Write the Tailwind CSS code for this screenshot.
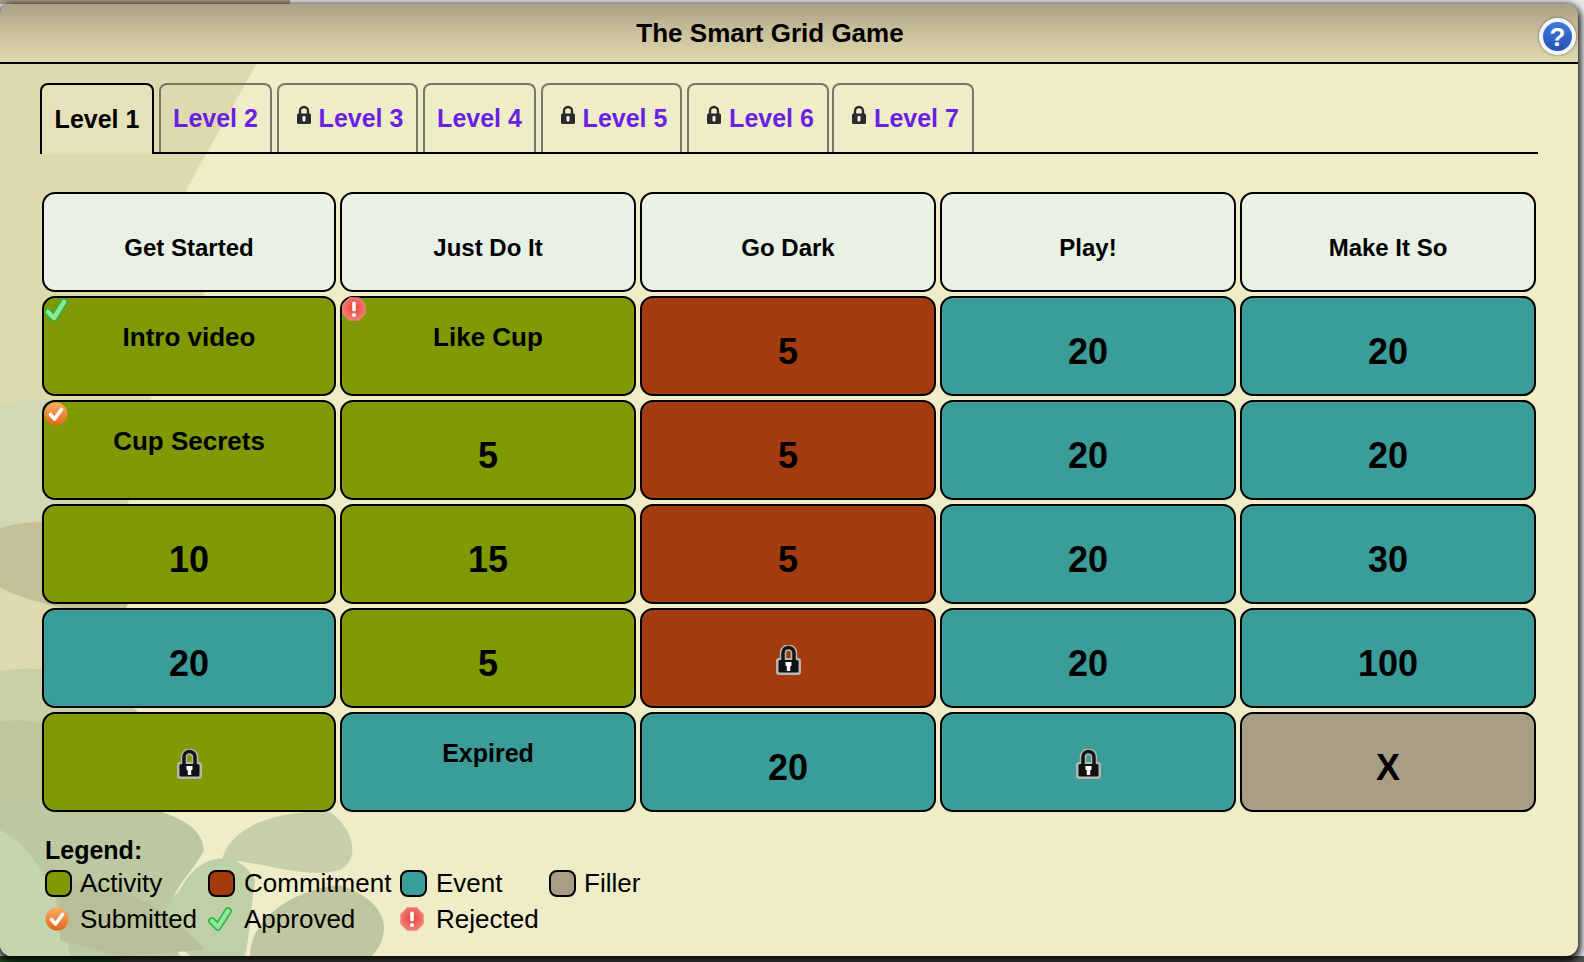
<!DOCTYPE html>
<html lang="en">
<head>
    <meta charset="UTF-8">
    <title>The Smart Grid Game</title>
    <script src="https://cdn.jsdelivr.net/npm/@tailwindcss/browser@4"></script>
</head>
<body class="bg-[#e9e9e9]">
    <!-- Shared icons -->
    <svg class="absolute w-0 h-0">
        <defs>
            <linearGradient id="orangeFill" x1="0" y1="0" x2="0" y2="1"><stop offset="0" stop-color="#fbae62"/><stop offset="1" stop-color="#e0661c"/></linearGradient>
            <radialGradient id="redFill" cx="50%" cy="45%" r="60%"><stop offset="0" stop-color="#ea4238"/><stop offset="1" stop-color="#f2807a"/></radialGradient>
            <symbol id="approved" viewBox="0 0 24 24">
                <path d="M4 14 L10 20 L20 4" fill="none" stroke="#2bb244" stroke-width="7.5" stroke-linecap="round" stroke-linejoin="round"/>
                <path d="M4 14 L10 20 L20 4" fill="none" stroke="#8fe898" stroke-width="4.5" stroke-linecap="round" stroke-linejoin="round"/>
            </symbol>
            <symbol id="submitted" viewBox="0 0 24 24">
                <circle cx="12" cy="12" r="11.5" fill="url(#orangeFill)"/>
                <path d="M6.5 12.5 L10.5 17 L17.5 7.5" fill="none" stroke="#fff" stroke-width="3.6" stroke-linecap="round" stroke-linejoin="round"/>
            </symbol>
            <symbol id="rejected" viewBox="0 0 24 24">
                <path d="M7.5 1 H16.5 L23 7.5 V16.5 L16.5 23 H7.5 L1 16.5 V7.5 Z" fill="url(#redFill)" stroke="#ee7f76" stroke-width="1.5" stroke-linejoin="round"/>
                <rect x="10.2" y="4.5" width="3.6" height="10" rx="1.7" fill="#fff"/>
                <circle cx="12" cy="18" r="2.1" fill="#fff"/>
            </symbol>
            <symbol id="lock" viewBox="0 0 25 30">
                <path d="M7 15 V8 a5.5 5.5 0 0 1 11 0 V15" fill="none" stroke="#b4b6b0" stroke-width="6.5"/>
                <rect x="0" y="13" width="25" height="17" rx="3" fill="#b4b6b0"/>
                <path d="M7 15 V8 a5.5 5.5 0 0 1 11 0 V15" fill="none" stroke="#151515" stroke-width="3.5"/>
                <rect x="2.5" y="15" width="20" height="12.5" rx="1.5" fill="#111"/>
                <path d="M9.5 17 h6 v3.5 l-1.3 1 v4.5 h-3.4 v-4.5 l-1.3 -1 Z" fill="#fff"/>
            </symbol>
            <symbol id="tabLock" viewBox="0 0 16 20">
                <path d="M4 10 V6 a4 4 0 0 1 8 0 V10" fill="none" stroke="#2b2b2b" stroke-width="2.4"/>
                <rect x="1" y="8.5" width="14" height="10.5" rx="1.5" fill="#2b2b2b"/>
                <rect x="6.5" y="11" width="3" height="5.5" rx="1" fill="#f2f2f2"/>
            </symbol>
        </defs>
    </svg>

    <div class="relative w-[1584px] h-[962px] overflow-hidden pt-[4px] font-['Liberation_Sans',Arial,sans-serif] text-black">
        <!-- Desktop behind the dialog -->
        <div class="absolute left-0 top-0 w-[290px] h-[4px] bg-[#a99a86]"></div>
        <div class="absolute left-0 bottom-0 w-[120px] h-[6px] bg-[#1f4a22]"></div>
        <div class="absolute left-[120px] bottom-0 w-[1464px] h-[6px] bg-[#4e4f4c]"></div>

        <div class="relative w-[1578px] h-[952px] rounded-[12px] bg-[#efecc8] shadow-[0_3px_7px_3px_rgba(0,0,0,0.85)]">
            <!-- Leaf wallpaper -->
            <svg class="absolute inset-0 w-[1578px] h-[952px] rounded-[12px]" viewBox="0 4 1578 952">
                <path d="M0 63 H257 L186 190 L205 292 L150 400 L60 720 L0 730 Z" fill="#dfd9ae"/>
                <path d="M0 403 C50 395 120 400 150 430 L120 530 L0 528 Z" fill="#d2d8b2"/>
                <path d="M0 528 C45 515 120 520 150 560 L120 620 C70 610 20 600 0 587 Z" fill="#c4c098"/>
                <path d="M0 671 C70 660 130 690 150 730 L150 820 L0 800 Z" fill="#c8d0a8"/>
                <path d="M0 722 C40 715 70 730 90 760 L60 810 L0 800 Z" fill="#bfc69c"/>
                <path d="M0 798 C90 800 200 800 204 850 C190 880 150 900 180 956 L0 956 Z" fill="#bcc8a0"/>
                <path d="M0 830 C40 850 60 900 70 956 H0 Z" fill="#c4d6ae"/>
                <path d="M222 860 C230 825 280 810 330 812 C355 830 360 860 340 870 C300 880 260 860 222 860 Z" fill="#c6cfa8"/>
                <path d="M180 890 C200 850 240 850 255 880 C250 915 250 935 245 956 H190 C160 930 160 910 180 890 Z" fill="#c0d0a6"/>
                <path d="M250 956 C250 920 290 890 340 885 C385 900 395 930 372 956 Z" fill="#c0c7a0"/>
                <path d="M60 880 C120 880 170 910 205 950 L120 956 L60 940 Z" fill="#b6bf98"/>
            </svg>

            <div class="relative flex flex-col h-full">
                <!-- Title bar -->
                <div class="relative flex items-center justify-center h-[60px] shrink-0 pr-[38px] border-b-2 border-black rounded-t-[12px] bg-gradient-to-b from-[#aca085] via-[#c9c19c] to-[#dfd9ae]">
                    <h1 class="text-[26px] font-bold leading-none">The Smart Grid Game</h1>
                    <button class="absolute left-[1539px] top-[14px] flex items-center justify-center w-[37px] h-[37px] rounded-full border-[4px] border-[#f2f4fa] bg-gradient-to-b from-[#3f79dc] to-[#2353b4] shadow-[0_0_3px_rgba(0,0,0,0.5)] text-white text-[26px] font-bold leading-none">?</button>
                </div>

                <!-- Level tabs -->
                <div class="flex gap-[5px] mt-[19px] ml-[40px] w-[1498px] h-[71px] border-b-2 border-black">
                    <div class="flex items-center justify-center w-[114px] h-[71px] border-2 border-b-0 border-black rounded-t-[8px] bg-[#e7e1ba] text-[25px] font-bold">Level 1</div>
                    <div class="flex items-center justify-center w-[113px] border-2 border-b-0 border-[#77776a] rounded-t-[8px] text-[25px] font-bold text-[#6a1fe4]">Level 2</div>
                    <div class="flex items-center justify-center gap-[7px] pl-[4px] w-[141px] border-2 border-b-0 border-[#77776a] rounded-t-[8px] text-[25px] font-bold text-[#6a1fe4]"><svg class="w-[16px] h-[20px] -mt-[8px]"><use href="#tabLock"/></svg>Level 3</div>
                    <div class="flex items-center justify-center w-[113px] border-2 border-b-0 border-[#77776a] rounded-t-[8px] text-[25px] font-bold text-[#6a1fe4]">Level 4</div>
                    <div class="flex items-center justify-center gap-[7px] pl-[4px] w-[141px] border-2 border-b-0 border-[#77776a] rounded-t-[8px] text-[25px] font-bold text-[#6a1fe4]"><svg class="w-[16px] h-[20px] -mt-[8px]"><use href="#tabLock"/></svg>Level 5</div>
                    <div class="flex items-center justify-center gap-[7px] pl-[4px] w-[142px] border-2 border-b-0 border-[#77776a] rounded-t-[8px] text-[25px] font-bold text-[#6a1fe4]"><svg class="w-[16px] h-[20px] -mt-[8px]"><use href="#tabLock"/></svg>Level 6</div>
                    <div class="flex items-center justify-center gap-[7px] pl-[4px] w-[142px] -ml-[2px] border-2 border-b-0 border-[#77776a] rounded-t-[8px] text-[25px] font-bold text-[#6a1fe4]"><svg class="w-[16px] h-[20px] -mt-[8px]"><use href="#tabLock"/></svg>Level 7</div>
                </div>

                <!-- Grid -->
                <div class="grid grid-cols-[294px_repeat(4,296px)] auto-rows-[100px] gap-[4px] mt-[38px] ml-[42px] font-bold">
                    <div class="flex items-center justify-center pt-[12px] border-2 border-black rounded-[13px] bg-[#e9f1e5] text-[24px]">Get Started</div>
                    <div class="flex items-center justify-center pt-[12px] border-2 border-black rounded-[13px] bg-[#e9f1e5] text-[24px]">Just Do It</div>
                    <div class="flex items-center justify-center pt-[12px] border-2 border-black rounded-[13px] bg-[#e9f1e5] text-[24px]">Go Dark</div>
                    <div class="flex items-center justify-center pt-[12px] border-2 border-black rounded-[13px] bg-[#e9f1e5] text-[24px]">Play!</div>
                    <div class="flex items-center justify-center pt-[12px] border-2 border-black rounded-[13px] bg-[#e9f1e5] text-[24px]">Make It So</div>

                    <div class="relative flex justify-center pt-[24px] border-2 border-black rounded-[13px] bg-[#7f9a05] text-[26px] leading-[30px]"><svg class="absolute left-0 top-0 w-[24px] h-[24px]"><use href="#approved"/></svg>Intro video</div>
                    <div class="relative flex justify-center pt-[24px] border-2 border-black rounded-[13px] bg-[#7f9a05] text-[26px] leading-[30px]"><svg class="absolute left-0 -top-[1px] w-[24px] h-[24px]"><use href="#rejected"/></svg>Like Cup</div>
                    <div class="flex items-center justify-center pt-[12px] border-2 border-black rounded-[13px] bg-[#a33b0e] text-[36px]">5</div>
                    <div class="flex items-center justify-center pt-[12px] border-2 border-black rounded-[13px] bg-[#3a9d9a] text-[36px]">20</div>
                    <div class="flex items-center justify-center pt-[12px] border-2 border-black rounded-[13px] bg-[#3a9d9a] text-[36px]">20</div>

                    <div class="relative flex justify-center pt-[24px] border-2 border-black rounded-[13px] bg-[#7f9a05] text-[26px] leading-[30px]"><svg class="absolute left-0 top-0 w-[24px] h-[24px]"><use href="#submitted"/></svg>Cup Secrets</div>
                    <div class="flex items-center justify-center pt-[12px] border-2 border-black rounded-[13px] bg-[#7f9a05] text-[36px]">5</div>
                    <div class="flex items-center justify-center pt-[12px] border-2 border-black rounded-[13px] bg-[#a33b0e] text-[36px]">5</div>
                    <div class="flex items-center justify-center pt-[12px] border-2 border-black rounded-[13px] bg-[#3a9d9a] text-[36px]">20</div>
                    <div class="flex items-center justify-center pt-[12px] border-2 border-black rounded-[13px] bg-[#3a9d9a] text-[36px]">20</div>

                    <div class="flex items-center justify-center pt-[12px] border-2 border-black rounded-[13px] bg-[#7f9a05] text-[36px]">10</div>
                    <div class="flex items-center justify-center pt-[12px] border-2 border-black rounded-[13px] bg-[#7f9a05] text-[36px]">15</div>
                    <div class="flex items-center justify-center pt-[12px] border-2 border-black rounded-[13px] bg-[#a33b0e] text-[36px]">5</div>
                    <div class="flex items-center justify-center pt-[12px] border-2 border-black rounded-[13px] bg-[#3a9d9a] text-[36px]">20</div>
                    <div class="flex items-center justify-center pt-[12px] border-2 border-black rounded-[13px] bg-[#3a9d9a] text-[36px]">30</div>

                    <div class="flex items-center justify-center pt-[12px] border-2 border-black rounded-[13px] bg-[#3a9d9a] text-[36px]">20</div>
                    <div class="flex items-center justify-center pt-[12px] border-2 border-black rounded-[13px] bg-[#7f9a05] text-[36px]">5</div>
                    <div class="flex items-center justify-center pt-[4px] border-2 border-black rounded-[13px] bg-[#a33b0e]"><svg class="w-[25px] h-[30px]"><use href="#lock"/></svg></div>
                    <div class="flex items-center justify-center pt-[12px] border-2 border-black rounded-[13px] bg-[#3a9d9a] text-[36px]">20</div>
                    <div class="flex items-center justify-center pt-[12px] border-2 border-black rounded-[13px] bg-[#3a9d9a] text-[36px]">100</div>

                    <div class="flex items-center justify-center pt-[4px] border-2 border-black rounded-[13px] bg-[#7f9a05]"><svg class="w-[25px] h-[30px]"><use href="#lock"/></svg></div>
                    <div class="flex justify-center pt-[24px] border-2 border-black rounded-[13px] bg-[#3a9d9a] text-[25px] leading-[30px]">Expired</div>
                    <div class="flex items-center justify-center pt-[12px] border-2 border-black rounded-[13px] bg-[#3a9d9a] text-[36px]">20</div>
                    <div class="flex items-center justify-center pt-[4px] border-2 border-black rounded-[13px] bg-[#3a9d9a]"><svg class="w-[25px] h-[30px]"><use href="#lock"/></svg></div>
                    <div class="flex items-center justify-center pt-[12px] border-2 border-black rounded-[13px] bg-[#a89d85] text-[36px]">X</div>
                </div>

                <!-- Legend -->
                <div class="mt-[22px] ml-[45px]">
                    <div class="text-[25px] font-bold leading-[32px]">Legend:</div>
                    <div class="grid grid-cols-[163px_192px_149px_1fr] auto-rows-[35px] items-center text-[26px] leading-none">
                        <div class="flex items-center gap-[8px]"><span class="w-[27px] h-[27px] border-2 border-black rounded-[8px] bg-[#7f9a05]"></span><span class="-mt-[1px]">Activity</span></div>
                        <div class="flex items-center gap-[9px]"><span class="w-[27px] h-[27px] border-2 border-black rounded-[8px] bg-[#a33b0e]"></span><span class="-mt-[1px]">Commitment</span></div>
                        <div class="flex items-center gap-[9px]"><span class="w-[27px] h-[27px] border-2 border-black rounded-[8px] bg-[#3a9d9a]"></span><span class="-mt-[1px]">Event</span></div>
                        <div class="flex items-center gap-[8px]"><span class="w-[27px] h-[27px] border-2 border-black rounded-[8px] bg-[#a89d85]"></span><span class="-mt-[1px]">Filler</span></div>
                        <div class="flex items-center gap-[11px]"><svg class="w-[24px] h-[24px]"><use href="#submitted"/></svg>Submitted</div>
                        <div class="flex items-center gap-[12px]"><svg class="w-[24px] h-[24px]"><use href="#approved"/></svg>Approved</div>
                        <div class="flex items-center gap-[12px]"><svg class="w-[24px] h-[24px]"><use href="#rejected"/></svg>Rejected</div>
                    </div>
                </div>
            </div>
        </div>
    </div>
</body>
</html>
